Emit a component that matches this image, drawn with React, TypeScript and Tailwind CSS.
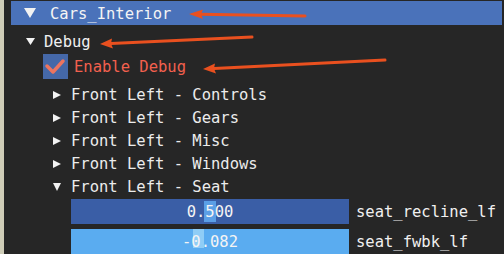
import React from "react";

const mono = { fontFamily: '"DejaVu Sans Mono", "Liberation Mono", monospace' };
const txt = "text-[15.5px] leading-none pt-[3px]";

function Down({ w, h }: { w: number; h: number }) {
  return (
    <svg width={w} height={h} viewBox={`0 0 ${w} ${h}`} className="shrink-0">
      <polygon points={`0,0 ${w},0 ${w / 2},${h}`} fill="#f2f2f2" />
    </svg>
  );
}

function Right() {
  return (
    <svg width={8} height={8} viewBox="0 0 8 8" className="shrink-0">
      <polygon points="0,0 8,4 0,8" fill="#f2f2f2" />
    </svg>
  );
}

function TreeRow({ label, open }: { label: string; open?: boolean }) {
  return (
    <div className="flex h-[23px] items-center pl-[42px]">
      <div className="flex w-[18px] items-center pt-[1px]">{open ? <Down w={8} h={8} /> : <Right />}</div>
      <span className={`${txt} text-[#ececec]`}>{label}</span>
    </div>
  );
}

export default function App() {
  return (
    <div className="relative flex h-[254px] w-[504px] overflow-hidden bg-[#262626]" style={mono}>
      <div className="w-[4px] shrink-0 bg-[#cfcdb8]" />
      <div className="flex flex-1 flex-col pl-[7px] pr-[2px]">
        <div className="mt-[1px] flex h-[25px] items-center bg-[#4a72ba] pl-[13px]">
          <Down w={12} h={10} />
          <span className={`ml-[14px] ${txt} text-[#f4f4f4]`}>Cars_Interior</span>
        </div>
        <div className="mt-[5px] flex h-[23px] items-center pl-[15px]">
          <Down w={9} h={7} />
          <span className={`ml-[9px] ${txt} text-[#f0f0f0]`}>Debug</span>
        </div>
        <div className="mt-[1px] flex h-[25px] items-center pl-[32px]">
          <div className="flex h-[25px] w-[25px] items-center justify-center bg-[#4568a8]">
            <svg width={25} height={25} viewBox="0 0 25 25">
              <polyline points="4,12 10,18 20,7" fill="none" stroke="#ec7560" strokeWidth={3.5} strokeLinecap="round" strokeLinejoin="round" />
            </svg>
          </div>
          <span className={`ml-[6px] ${txt} text-[#f2604e]`}>Enable Debug</span>
        </div>
        <div className="mt-[4px] flex flex-col">
          <TreeRow label="Front Left - Controls" />
          <TreeRow label="Front Left - Gears" />
          <TreeRow label="Front Left - Misc" />
          <TreeRow label="Front Left - Windows" />
          <TreeRow label="Front Left - Seat" open />
        </div>
        <div className="mt-[1px] flex h-[25px] items-center pl-[60px]">
          <div className="relative flex h-[25px] w-[278px] items-center justify-center bg-[#3a5ea6]">
            <div className="absolute left-[133px] top-[2px] h-[21px] w-[12px] bg-[#5b9fe6]" />
            <span className={`relative ${txt} text-[#f4f4f4]`}>0.500</span>
          </div>
          <span className={`ml-[7px] ${txt} text-[#f0f0f0]`}>seat_recline_lf</span>
        </div>
        <div className="mt-[5px] flex h-[25px] items-center pl-[60px]">
          <div className="relative flex h-[25px] w-[278px] items-center justify-center bg-[#5aacf0]">
            <div className="absolute left-[122px] top-[0px] h-[19px] w-[11px] bg-[#8fcdf6]" />
            <span className={`relative ${txt} text-[#f4f4f4]`}>-0.082</span>
          </div>
          <span className={`ml-[7px] ${txt} text-[#f0f0f0]`}>seat_fwbk_lf</span>
        </div>
      </div>
      <svg className="pointer-events-none absolute left-0 top-0" width={504} height={254} viewBox="0 0 504 254">
        <g stroke="#e9501f" strokeWidth={3} strokeLinecap="round" fill="#e9501f">
          <line x1={200} y1={14.2} x2={305} y2={16} />
          <polygon points="189,14 203,9.5 201,14.2 203,19" stroke="none" />
          <line x1={111} y1={43.4} x2={252} y2={37} />
          <polygon points="100,44 112,38.5 111,43.4 113,48.5" stroke="none" />
          <line x1={214} y1={68.5} x2={385} y2={60} />
          <polygon points="203,69 215,63.5 214,68.5 216,73.5" stroke="none" />
        </g>
      </svg>
    </div>
  );
}
